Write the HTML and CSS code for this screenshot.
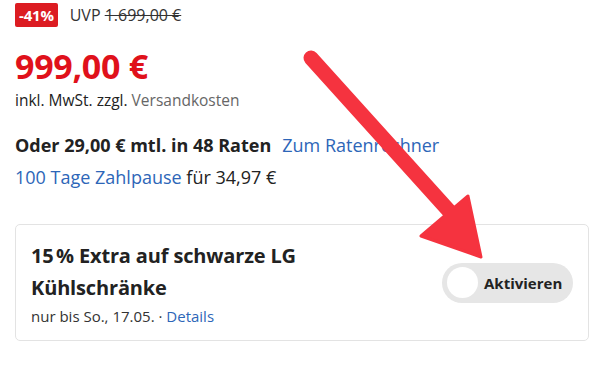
FILE: index.html
```html
<!DOCTYPE html>
<html>
<head>
<meta charset="UTF-8">
<title>Preis</title>
<link rel="stylesheet" href="styles.css">
</head>
<body>
	<div class="page">
		<div class="uvp-row">
			<span class="badge">-41%</span>
			<span class="uvp">UVP <s>1.699,00 €</s></span>
		</div>
		<div class="price">999,00 €</div>
		<div class="tax">inkl. MwSt. zzgl. <span class="muted">Versandkosten</span></div>
		<div class="rates">
			<b>Oder 29,00 € mtl. in 48 Raten</b>
			<a class="link">Zum Ratenrechner</a>
		</div>
		<div class="pause"><a class="link">100 Tage Zahlpause</a> für 34,97 €</div>
		<div class="card">
			<div class="card-text">
				<div class="card-title">15&#8239;% Extra auf schwarze LG Kühlschränke</div>
				<div class="card-sub">nur bis So., 17.05. · <a class="link">Details</a></div>
			</div>
			<div class="toggle">
				<span class="knob"></span>
				<span class="toggle-label">Aktivieren</span>
			</div>
		</div>
	</div>
	<svg class="arrow" width="600" height="385" viewBox="0 0 600 385">
		<line x1="311" y1="58" x2="450" y2="212" stroke="#f5333f" stroke-width="15" stroke-linecap="round"/>
		<polygon points="421,236 468,196 481,257" fill="#f5333f" stroke="#f5333f" stroke-width="3" stroke-linejoin="round"/>
	</svg>
</body>
</html>
```
FILE: styles.css
```css
body{
	margin: 0;
	background: #fff;
	font-family: "Open Sans", "Liberation Sans", sans-serif;
	color: #222;
}
.page{
	padding: 3px 11px 0 15px;
}
.uvp-row{
	display: flex;
	align-items: center;
	gap: 12px;
	height: 24px;
}
.badge{
	background: #dc1c22;
	color: #fff;
	font-weight: 700;
	font-size: 15px;
	line-height: 24px;
	padding: 0 4px;
	border-radius: 2px;
	letter-spacing: -0.2px;
}
.uvp{
	font-size: 16px;
	color: #333;
}
.price{
	margin-top: 21px;
	font-size: 34px;
	font-weight: 700;
	color: #e0111b;
	line-height: 36px;
	letter-spacing: -0.3px;
}
.tax{
	margin-top: 6px;
	font-size: 15.5px;
	line-height: 20px;
}
.muted{
	color: #666;
}
.rates{
	margin-top: 23px;
	font-size: 18px;
	line-height: 24px;
	display: flex;
	gap: 11px;
}
.pause{
	margin-top: 8px;
	font-size: 18px;
	line-height: 24px;
}
.link{
	color: #2d66b8;
}
.card{
	margin-top: 35px;
	border: 1px solid #e3e3e3;
	border-radius: 5px;
	height: 115px;
	padding: 0 15px 0 15px;
	display: flex;
	align-items: center;
	justify-content: space-between;
}
.card-text{
	width: 320px;
}
.card-title{
	font-size: 20px;
	font-weight: 700;
	line-height: 32px;
	letter-spacing: -0.15px;
}
.card-sub{
	margin-top: 2px;
	font-size: 15px;
	line-height: 20px;
	color: #333;
}
.toggle{
	width: 131px;
	height: 40px;
	border-radius: 20px;
	background: #e6e6e6;
	display: flex;
	align-items: center;
	box-sizing: border-box;
	padding: 0 5px;
	gap: 6px;
}
.knob{
	width: 31px;
	height: 31px;
	border-radius: 50%;
	background: #fff;
}
.toggle-label{
	font-size: 15px;
	font-weight: 700;
	color: #222;
}
.arrow{
	position: absolute;
	left: 0;
	top: 0;
}
```
